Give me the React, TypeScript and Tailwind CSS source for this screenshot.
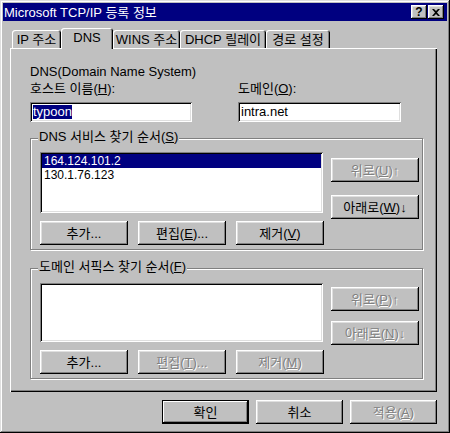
import clsx from "clsx";
import type { ReactNode } from "react";

const raised =
  "shadow-[inset_-1px_-1px_#000,inset_1px_1px_#fff,inset_-2px_-2px_#808080,inset_2px_2px_#dfdfdf]";
const sunken =
  "shadow-[inset_1px_1px_#808080,inset_-1px_-1px_#fff,inset_2px_2px_#000,inset_-2px_-2px_#dfdfdf]";
const disabledText = "text-[#808080] [text-shadow:1px_1px_0_#fff]";

function Btn({
  children,
  disabled,
  className,
}: {
  children: ReactNode;
  disabled?: boolean;
  className?: string;
}) {
  return (
    <button
      type="button"
      className={clsx(
        "flex h-[24px] items-center justify-center bg-[#c0c0c0] leading-[15px]",
        raised,
        disabled && disabledText,
        className
      )}
    >
      {children}
    </button>
  );
}

function Tab({ label, width, active }: { label: string; width: string; active?: boolean }) {
  return (
    <div
      className={clsx(
        "flex items-center justify-center rounded-t-[3px] bg-[#c0c0c0] leading-[15px]",
        "shadow-[inset_1px_1px_#fff,inset_-1px_0_#000,inset_-2px_0_#808080]",
        width,
        active ? "relative z-10 -mb-[1px] h-[21px] pb-[2px]" : "h-[18px]"
      )}
    >
      {label}
    </div>
  );
}

function Group({
  label,
  className,
  children,
}: {
  label: ReactNode;
  className?: string;
  children: ReactNode;
}) {
  return (
    <div
      className={clsx(
        "relative w-[393px] border border-[#808080] shadow-[inset_1px_1px_#fff,1px_1px_#fff]",
        className
      )}
    >
      <span className="absolute -top-[10px] left-[7px] bg-[#c0c0c0] px-[1px] leading-[15px]">
        {label}
      </span>
      {children}
    </div>
  );
}

function ListBox({ items, height }: { items: string[]; height: string }) {
  return (
    <div className={clsx("w-[283px] bg-white p-[2px]", sunken, height)}>
      {items.map((item, i) => (
        <div
          key={item}
          className={clsx(
            "flex h-[14px] items-center px-[2px] text-[12px] leading-[12px]",
            i === 0 && "bg-[#000080] text-white"
          )}
        >
          {item}
        </div>
      ))}
    </div>
  );
}

export default function App() {
  return (
    <div
      className={clsx(
        "flex h-[433px] w-[450px] flex-col bg-[#c0c0c0] p-[3px] text-[13px] text-black",
        "[font-family:'Liberation_Sans','Noto_Sans_CJK_KR',sans-serif]",
        "shadow-[inset_-1px_-1px_#000,inset_1px_1px_#dfdfdf,inset_-2px_-2px_#808080,inset_2px_2px_#fff]"
      )}
    >
      {/* title bar */}
      <div className="flex h-[18px] items-center justify-between bg-[#000080] pl-[1px] pr-[3px]">
        <span className="leading-[15px] text-white">Microsoft TCP/IP 등록 정보</span>
        <div className="flex gap-[1px]">
          <div
            className={clsx(
              "flex h-[14px] w-[16px] items-center justify-center bg-[#c0c0c0] text-[12px] font-bold leading-none",
              raised
            )}
          >
            ?
          </div>
          <div
            className={clsx(
              "flex h-[14px] w-[16px] items-center justify-center bg-[#c0c0c0]",
              raised
            )}
          >
            <svg width="8" height="7" viewBox="0 0 8 7">
              <path d="M0 0h2l2 2 2-2h2L5 3.5 8 7H6L4 5 2 7H0l3-3.5z" fill="#000" />
            </svg>
          </div>
        </div>
      </div>

      <div className="mt-[7px] flex flex-col pl-[7px]">
        {/* tabs */}
        <div className="flex items-end pl-[2px]">
          <Tab label="IP 주소" width="w-[49px]" />
          <Tab label="DNS" width="w-[52px]" active />
          <Tab label="WINS 주소" width="w-[67px]" />
          <Tab label="DHCP 릴레이" width="w-[86px]" />
          <Tab label="경로 설정" width="w-[64px]" />
        </div>

        {/* panel */}
        <div
          className={clsx(
            "flex h-[344px] w-[427px] flex-col px-[20px] pt-[16px]",
            "shadow-[inset_1px_1px_#fff,inset_-1px_-1px_#000,inset_-2px_-2px_#808080]"
          )}
        >
          <div className="leading-[15px]">DNS(Domain Name System)</div>

          <div className="mt-[2px] flex gap-[46px]">
            <div className="flex w-[162px] flex-col">
              <span className="leading-[15px]">
                호스트 이름(<u>H</u>):
              </span>
              <div className={clsx("mt-[6px] flex h-[20px] items-center bg-white pl-[3px]", sunken)}>
                <span className="bg-[#000080] leading-[14px] text-white">typoon</span>
              </div>
            </div>
            <div className="flex w-[163px] flex-col">
              <span className="leading-[15px]">
                도메인(<u>O</u>):
              </span>
              <div className={clsx("mt-[6px] flex h-[20px] items-center bg-white pl-[3px]", sunken)}>
                <span className="leading-[14px]">intra.net</span>
              </div>
            </div>
          </div>

          <Group
            className="mt-[16px] h-[112px] pl-[9px] pt-[13px]"
            label={
              <>
                DNS 서비스 찾기 순서(<u>S</u>)
              </>
            }
          >
            <div className="flex items-start">
              <ListBox items={["164.124.101.2", "130.1.76.123"]} height="h-[61px]" />
              <div className="ml-[8px] flex flex-col gap-[13px] pt-[6px]">
                <Btn disabled className="w-[88px]">
                  위로(<u>U</u>)↑
                </Btn>
                <Btn className="w-[88px]">
                  아래로(<u>W</u>)↓
                </Btn>
              </div>
            </div>
            <div className="mt-[2px] flex gap-[10px]">
              <Btn className="w-[88px]">추가...</Btn>
              <Btn className="w-[88px]">
                편집(<u>E</u>)...
              </Btn>
              <Btn className="w-[88px]">
                제거(<u>V</u>)
              </Btn>
            </div>
          </Group>

          <Group
            className="mt-[18px] h-[111px] pl-[9px] pt-[14px]"
            label={
              <>
                도메인 서픽스 찾기 순서(<u>F</u>)
              </>
            }
          >
            <div className="flex items-start">
              <ListBox items={[]} height="h-[59px]" />
              <div className="ml-[8px] flex flex-col gap-[10px] pt-[4px]">
                <Btn disabled className="w-[88px]">
                  위로(<u>P</u>)↑
                </Btn>
                <Btn disabled className="w-[88px]">
                  아래로(<u>N</u>)↓
                </Btn>
              </div>
            </div>
            <div className="mt-[5px] flex gap-[10px]">
              <Btn className="w-[88px]">추가...</Btn>
              <Btn disabled className="w-[88px]">
                편집(<u>T</u>)...
              </Btn>
              <Btn disabled className="w-[88px]">
                제거(<u>M</u>)
              </Btn>
            </div>
          </Group>
        </div>

        {/* dialog buttons */}
        <div className="mt-[8px] flex w-[427px] justify-end gap-[7px]">
          <button
            type="button"
            className="flex h-[24px] w-[87px] items-center justify-center bg-[#c0c0c0] leading-[15px] shadow-[inset_0_0_0_1px_#000,inset_-2px_-2px_#000,inset_2px_2px_#fff,inset_-3px_-3px_#808080]"
          >
            확인
          </button>
          <Btn className="w-[87px]">취소</Btn>
          <Btn disabled className="w-[87px]">
            적용(<u>A</u>)
          </Btn>
        </div>
      </div>
    </div>
  );
}
